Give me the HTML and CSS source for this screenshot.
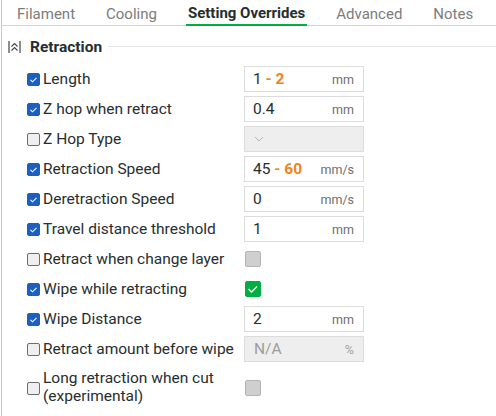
FILE: index.html
```html
<!DOCTYPE html>
<html lang="en">
<head>
    <meta charset="UTF-8">
    <title>Filament Settings</title>
    <link rel="stylesheet" href="styles.css">
</head>
<body>
    <div class="panel">
        <!-- Tab bar -->
        <div class="tabs">
            <span class="tab">Filament</span>
            <span class="tab">Cooling</span>
            <span class="tab active">Setting Overrides</span>
            <span class="tab">Advanced</span>
            <span class="tab">Notes</span>
        </div>

        <!-- Retraction group -->
        <div class="group-title">
            <svg class="collapse" width="13" height="14" viewBox="0 0 13 14">
                <path d="M1 1v12M12 1v12" stroke="#444" stroke-width="1.2" fill="none"/>
                <path d="M3.5 6.5l3-3 3 3M3.5 10.5l3-3 3 3" stroke="#444" stroke-width="1.1" fill="none"/>
            </svg>
            <span class="group-name">Retraction</span>
            <span class="group-line"></span>
        </div>

        <div class="rows">
            <div class="row">
                <label class="opt"><span class="cb on"></span>Length</label>
                <div class="field"><span class="val">1 <span class="range">- 2</span></span><span class="unit">mm</span></div>
            </div>
            <div class="row">
                <label class="opt"><span class="cb on"></span>Z hop when retract</label>
                <div class="field"><span class="val">0.4</span><span class="unit">mm</span></div>
            </div>
            <div class="row">
                <label class="opt"><span class="cb"></span>Z Hop Type</label>
                <div class="field disabled">
                    <svg width="10" height="6" viewBox="0 0 10 6"><path d="M1 1l4 4 4-4" stroke="#b4b4b4" stroke-width="1" fill="none"/></svg>
                </div>
            </div>
            <div class="row">
                <label class="opt"><span class="cb on"></span>Retraction Speed</label>
                <div class="field"><span class="val">45 <span class="range">- 60</span></span><span class="unit">mm/s</span></div>
            </div>
            <div class="row">
                <label class="opt"><span class="cb on"></span>Deretraction Speed</label>
                <div class="field"><span class="val">0</span><span class="unit">mm/s</span></div>
            </div>
            <div class="row">
                <label class="opt"><span class="cb on"></span>Travel distance threshold</label>
                <div class="field"><span class="val">1</span><span class="unit">mm</span></div>
            </div>
            <div class="row">
                <label class="opt"><span class="cb"></span>Retract when change layer</label>
                <span class="toggle"></span>
            </div>
            <div class="row">
                <label class="opt"><span class="cb on"></span>Wipe while retracting</label>
                <span class="toggle checked"></span>
            </div>
            <div class="row">
                <label class="opt"><span class="cb on"></span>Wipe Distance</label>
                <div class="field"><span class="val">2</span><span class="unit">mm</span></div>
            </div>
            <div class="row">
                <label class="opt"><span class="cb"></span>Retract amount before wipe</label>
                <div class="field disabled"><span class="val">N/A</span><span class="unit">%</span></div>
            </div>
            <div class="row tall">
                <label class="opt"><span class="cb"></span><span class="wrap">Long retraction when cut<br>(experimental)</span></label>
                <span class="toggle"></span>
            </div>
        </div>
    </div>
</body>
</html>
```

FILE: styles.css
```css
body {
    margin: 0;
    font-family: Roboto, "Noto Sans", sans-serif;
    font-size: 15.5px;
    color: #262e30;
    background: #fff;
}
.panel {
    width: 495px;
    height: 416px;
    margin-left: 1px;
    border-left: 1px solid #c9c9c9;
    overflow: hidden;
}
.tabs {
    display: flex;
    gap: 27px;
    height: 26px;
    padding-left: 13px;
    border-bottom: 1px solid #d4d4d4;
    box-sizing: border-box;
}
.tab {
    padding: 1px 2px 0;
    line-height: 26px;
    color: #7c7c7c;
    font-size: 15px;
    white-space: nowrap;
}
.tab.active {
    color: #262e30;
    font-weight: 700;
    border-bottom: 2px solid #00ae42;
    line-height: 24px;
    margin-bottom: -1px;
}
.group-title {
    display: flex;
    align-items: center;
    height: 35px;
    margin-top: 3px;
    padding-left: 6px;
}
.collapse { margin-right: 9px; }
.group-name {
    font-weight: 700;
    font-size: 15.5px;
}
.group-line {
    flex: 1;
    height: 1px;
    margin-left: 6px;
    background: #e6e6e6;
}
.rows { padding-left: 25px; }
.row {
    display: flex;
    align-items: center;
    height: 30px;
}
.row.tall {
    height: 46px;
}
.opt {
    width: 217px;
    display: flex;
    align-items: center;
    line-height: 16px;
    white-space: nowrap;
}
.wrap { line-height: 18px; }
.cb {
    flex: none;
    width: 13px;
    height: 13px;
    margin-right: 3px;
    border: 1px solid #6d6d6d;
    border-radius: 2px;
    background: #efefef;
    box-sizing: border-box;
}
.cb.on {
    border-color: #1b5fc1;
    background: #1b5fc1 url("data:image/svg+xml,%3Csvg xmlns='http://www.w3.org/2000/svg' width='13' height='13'%3E%3Cpath d='M3.5 6.8l2 2 4-4' stroke='white' stroke-width='1.1' fill='none'/%3E%3C/svg%3E") center/13px 13px no-repeat;
}
.tall .cb { margin-top: 3px; }
.field {
    display: flex;
    align-items: center;
    justify-content: space-between;
    width: 120px;
    height: 26px;
    padding: 0 9px 0 8px;
    border: 1px solid #dcdcdc;
    box-sizing: border-box;
    font-size: 15.5px;
}
.field.disabled {
    background: #eeeeee;
    color: #9c9c9c;
    padding-left: 9px;
}
.val { white-space: pre; }
.range {
    color: #f58220;
    font-weight: 700;
}
.unit {
    font-size: 12.5px;
    color: #6e6e6e;
}
.disabled .unit { color: #a4a4a4; }
.toggle {
    width: 16px;
    height: 16px;
    margin-left: 1px;
    border: 1px solid #b4b4b4;
    border-radius: 2px;
    background: #cfcfcf;
    box-sizing: border-box;
}
.toggle.checked {
    border-color: #00ae42;
    background: #00ae42 url("data:image/svg+xml,%3Csvg xmlns='http://www.w3.org/2000/svg' width='16' height='16'%3E%3Cpath d='M3.5 8l3 3 5.5-5.5' stroke='white' stroke-width='1.3' fill='none'/%3E%3C/svg%3E") center/16px 16px no-repeat;
}
.tall .toggle { margin-top: 1px; }
```
